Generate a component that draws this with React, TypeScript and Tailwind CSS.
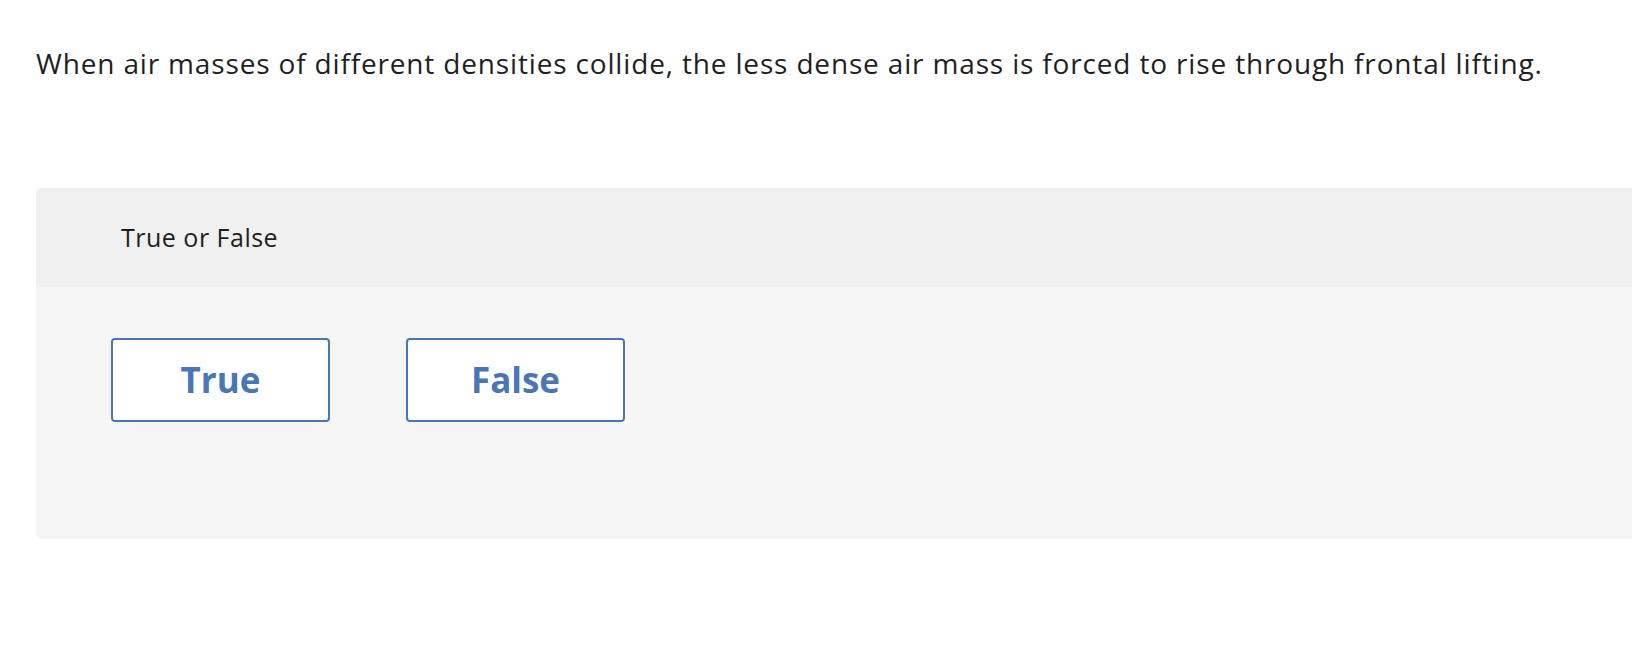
export default function App() {
    const options = ["True", "False"];

    return (
        <div className="min-h-screen w-full overflow-hidden bg-white font-['Open_Sans','Lato',sans-serif] text-[#1f1f1f]">
            {/* Question prompt */}
            <div className="pl-[36px] pt-[44px]">
                <p className="text-[28px] leading-[38px] tracking-[0.84px]">
                    When air masses of different densities collide, the less dense air mass is forced to rise through frontal lifting.
                </p>
            </div>

            {/* Answer panel */}
            <div className="ml-[36px] mt-[106px] w-[1640px] overflow-hidden rounded-[5px] bg-[#f5f5f5]">
                <div className="flex h-[99px] items-center bg-[#f0f0f0] pl-[85px]">
                    <span className="text-[25px] leading-none tracking-[0.5px]">True or False</span>
                </div>
                <div className="flex h-[252px] items-start gap-[76px] pl-[75px] pt-[51px]">
                    {options.map((opt) => (
                        <button
                            key={opt}
                            className="flex h-[84px] w-[219px] items-center justify-center rounded-[4px] border-2 border-[#4a76b5] bg-white text-[35px] font-bold text-[#4a76b5]"
                        >
                            {opt}
                        </button>
                    ))}
                </div>
            </div>
        </div>
    );
}
